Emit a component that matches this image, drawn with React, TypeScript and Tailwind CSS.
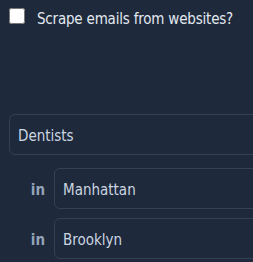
import type { FC } from 'react';

const font = { fontFamily: '"DejaVu Sans Condensed", "DejaVu Sans", sans-serif' };

const Location: FC<{ value: string }> = ({ value }) => (
  <div className="flex items-center">
    <span className="w-[45px] pr-[9px] pt-[3px] text-right text-[15px] font-bold text-[#94a3b8]">in</span>
    <div className="flex h-[41px] w-[300px] shrink-0 items-center rounded-md border border-[#334155] px-[8px] pt-[4px] text-[15px] text-[#cbd5e1]">
      {value}
    </div>
  </div>
);

export default function App() {
  return (
    <div className="h-[262px] w-[253px] overflow-hidden bg-[#1e293b]" style={font}>
      <div className="w-[400px] pl-[9px] pt-[8px]">
        <label className="flex items-start gap-[12px]">
          <input type="checkbox" className="m-0 h-4 w-4 shrink-0" />
          <span className="pt-[1px] text-[15px] leading-5 tracking-[-0.2px] text-[#e2e8f0]">
            Scrape emails from websites?
          </span>
        </label>
        <div className="mt-[85px] flex h-[41px] w-[320px] items-center rounded-md border border-[#334155] px-[8px] pt-[4px] text-[15px] text-[#cbd5e1]">
          Dentists
        </div>
        <div className="mt-[13px] flex flex-col gap-[9px]">
          <Location value="Manhattan" />
          <Location value="Brooklyn" />
        </div>
      </div>
    </div>
  );
}
